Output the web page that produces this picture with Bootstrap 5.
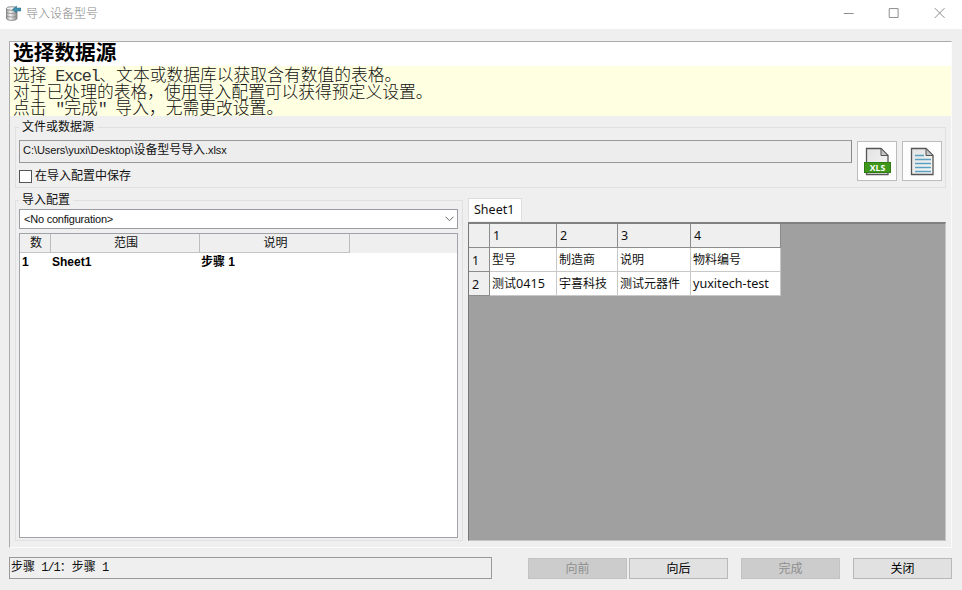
<!DOCTYPE html>
<html lang="zh-CN">
<head>
<meta charset="utf-8">
<title>导入设备型号</title>
<link href="https://cdn.jsdelivr.net/npm/bootstrap@5.3.0/dist/css/bootstrap.min.css" rel="stylesheet">
<style>
body{width:962px;height:590px;background:#efefef;font:12px/16px "Liberation Sans","Noto Sans CJK SC",sans-serif;color:#111;overflow:hidden}
.titlebar{height:29px;background:#fff;color:#858585;padding-left:5px}
.titlebar .caption{margin-left:5px;line-height:28px;font-weight:300}
.winbtns{width:136px;height:29px}
.winbtns svg{width:46px;height:29px}
.panel{margin:12px 10px 0 9px;height:507px;border:1px solid;border-color:#ababab #fbfbfb #fbfbfb #ababab}
.heading{height:24px;background:#fff;padding-left:3px;font:700 20.7px/19px "Noto Sans CJK SC",sans-serif;color:#000}
.hint{height:50px;background:#ffffe1;padding-left:3px;font:300 16.8px/16.6px "Noto Sans CJK SC",sans-serif;color:#111;white-space:pre}
.hint>div{height:16.6px}
.hint .half{font:16.8px/0 "Liberation Mono",monospace;letter-spacing:-1.28px;color:#333}
.group{border:1px solid #e0e0e0}
.group .caption{width:max-content;background:#efefef;padding:0 3px;margin:-9px 0 0 3px;height:16px}
.g-source{margin:11px 5px 0;height:61px}
.g-config{width:448px;height:341px}
.path{width:833px;height:23px;border:1px solid #999;border-right-color:#888;background:#ededed;padding:1px 3px;font-size:11px;letter-spacing:-.06px;line-height:16px;margin-top:5px}
.path .cjk{font-size:12px;letter-spacing:-.1px}
.source-left{width:838px;margin-left:3px}
.source-left label{margin-top:5px}
.chk{width:13px;height:13px;border:1px solid #555;background:#fff;margin-right:3px}
.toolbtn{width:40px;height:40px;border:1px solid #bcbcbc;background:#fdfdfd;margin-top:13px}
.toolbtn+.toolbtn{margin-left:5px}
.combo{width:439px;height:20px;border:1px solid #999ca0;background:#fff;margin:1px 0 0 3px;padding:0 3px 0 4px;font-size:11px;letter-spacing:-.22px}
.tree{width:439px;height:305px;border:1px solid #a0a4a8;background:#fff;margin:4px 0 0 3px}
.tree .thead{height:19px;background:#efefef;font-weight:400}
.tree .thead div{border-right:1px solid #bdbdbd;border-bottom:1px solid #c4c4c4;text-align:center;line-height:19px;height:19px;padding-left:2px}
.c-a{width:31px}.c-b{width:149px}.c-c{width:150px}
.tree .trow{font-weight:700;line-height:18px;color:#000}
.tree .trow div{padding-left:2px}
.tree .trow div+div{padding-left:1px}
.lower{margin:12px 0 0 5px}
.preview{width:478px;margin:-2px 0 0 5px;font-family:"Noto Sans","Noto Sans CJK SC",sans-serif}
.sheet-tab{width:54px;height:23px;background:#fff;border:1px solid #dedede;border-bottom:0;line-height:22px;padding-left:5px;font-size:12.5px;margin-bottom:1px}
.gridarea{height:319px;background:#a0a0a0;border:1px solid;border-color:#808080 #c5c5c5 #c5c5c5 #777;border-top-width:2px}
.sheet{width:312px;table-layout:fixed;border-collapse:separate;border-spacing:0;font-size:12px;line-height:20px}
.sheet th,.sheet td{height:24px;padding:0 0 0 2px;font-weight:400;border-right:1px solid #c8c8c8;border-bottom:1px solid #c8c8c8;background:#fff;white-space:nowrap;vertical-align:middle}
.sheet th{background:#efefef;border-color:#8c8c8c;padding-left:3px;font-size:12.5px}
.sheet tbody th{padding-top:2px}
.sheet thead th{height:24px}
.latin{font-size:12.6px}
.footer-row{margin:10px 10px 0 9px}
.status{width:483px;height:22px;margin-top:-1px;border:1px solid #999;font:12px/15px "Noto Sans CJK SC",sans-serif;padding-left:1px;white-space:pre}
.status .half{font:12px/0 "Liberation Mono",monospace;letter-spacing:-1px}
.dlgbtn{width:99px;height:21px;border:1px solid #b8b8b8;border-radius:0;background:#e1e1e1;padding:0;font-size:12px;line-height:18px;color:#000}
.dlgbtn:disabled{background:#cccccc;border-color:#c2c2c2;color:#8e8e8e;opacity:1}
.actions .dlgbtn+.dlgbtn{margin-left:2px}
.actions .dlgbtn:nth-child(n+3){margin-left:13px}
</style>
</head>
<body>
<header class="titlebar d-flex">
  <svg width="16" height="17" viewBox="0 0 16 17" class="mt-1 pt-0">
    <defs><linearGradient id="cyl"><stop offset="0" stop-color="#999"/><stop offset=".35" stop-color="#f4f4f4"/><stop offset="1" stop-color="#888"/></linearGradient></defs>
    <path d="M1.500 4.500v10c0 2.500 10.500 2.500 10.500 0v-10z" fill="url(#cyl)" stroke="#777" stroke-width=".8"/>
    <ellipse cx="6.700" cy="4.500" rx="5.300" ry="1.800" fill="#eee" stroke="#777" stroke-width=".8"/>
    <path d="M1.500 8c1 2 9.500 2 10.500 0M1.500 11.500c1 2 9.500 2 10.500 0" fill="none" stroke="#888" stroke-width=".8"/>
    <path d="M7.500 5.500l4-3.500v2H16v3h-4.500v2z" fill="#3f8fae" stroke="#2d6f8b" stroke-width=".5"/>
  </svg>
  <span class="caption">导入设备型号</span>
  <div class="winbtns d-flex ms-auto">
    <svg viewBox="0 0 46 29"><path d="M18 13.500h10" stroke="#8c8c8c"/></svg>
    <svg viewBox="0 0 46 29"><path d="M18.500 8.500h9v9h-9z" fill="none" stroke="#8c8c8c"/></svg>
    <svg viewBox="0 0 46 29"><path d="M18 8l10 10M28 8L18 18" stroke="#8c8c8c"/></svg>
  </div>
</header>
<main class="panel">
  <div class="heading">选择数据源</div>
  <div class="hint"><div>选择<span class="half"> Excel</span>、文本或数据库以获取含有数值的表格。</div><div>对于已处理的表格，使用导入配置可以获得预定义设置。</div><div>点击<span class="half"> "</span>完成<span class="half">" </span>导入，无需更改设置。</div></div>
  <section class="group g-source d-flex">
    <div class="source-left">
      <div class="caption ms-0">文件或数据源</div>
      <div class="path">C:\Users\yuxi\Desktop\<span class="cjk">设备型号导入</span>.xlsx</div>
      <label class="d-flex align-items-center"><span class="chk"></span><span>在导入配置中保存</span></label>
    </div>
    <div class="toolbtn">
      <svg width="38" height="38" viewBox="0 0 38 38">
        <defs><linearGradient id="pg" x2="1" y2="1"><stop offset="0" stop-color="#e2e2e2"/><stop offset="1" stop-color="#f8f8f8"/></linearGradient></defs>
        <path d="M8.500 6.500h14.500l7 7v19H8.500z" fill="url(#pg)" stroke="#555" stroke-width="1.300"/>
        <path d="M23 6.500v7h7z" fill="#c5c5c5" stroke="#555"/>
        <rect x="6.500" y="20.500" width="26" height="10" fill="#3f981b" stroke="#2f7d12"/>
        <text x="19.500" y="29" text-anchor="middle" textLength="15.500" lengthAdjust="spacingAndGlyphs" font-family="Open Sans,sans-serif" font-size="9.500" font-weight="700" fill="#fff">XLS</text>
      </svg>
    </div>
    <div class="toolbtn">
      <svg width="38" height="38" viewBox="0 0 38 38">
        <path d="M8.500 6.500h14.500l7 7v19H8.500z" fill="url(#pg)" stroke="#555" stroke-width="1.300"/>
        <path d="M23 6.500v7h7z" fill="#c5c5c5" stroke="#555"/>
        <path d="M12 13.500h9M12 17.500h16M12 21.500h16M12 25.500h16M12 29.500h16" stroke="#5aa0bf" stroke-width="1.300"/>
      </svg>
    </div>
  </section>
  <div class="d-flex lower">
    <section class="group g-config">
      <div class="caption">导入配置</div>
      <div class="combo d-flex align-items-center justify-content-between"><span>&lt;No configuration&gt;</span><svg width="9" height="6" viewBox="0 0 9 6"><path d="M.5.7l4 4 4-4" fill="none" stroke="#666"/></svg></div>
      <div class="tree">
        <div class="thead d-flex"><div class="c-a">数</div><div class="c-b">范围</div><div class="c-c">说明</div></div>
        <div class="trow d-flex"><div class="c-a">1</div><div class="c-b">Sheet1</div><div class="c-c">步骤 1</div></div>
      </div>
    </section>
    <section class="preview">
      <div class="sheet-tab">Sheet1</div>
      <div class="gridarea">
        <table class="sheet">
          <colgroup><col width="21"><col width="67"><col width="61"><col width="73"><col width="90"></colgroup>
          <thead><tr><th></th><th>1</th><th>2</th><th>3</th><th>4</th></tr></thead>
          <tbody>
            <tr><th>1</th><td>型号</td><td>制造商</td><td>说明</td><td>物料编号</td></tr>
            <tr><th>2</th><td>测试<span class="latin">0415</span></td><td>宇喜科技</td><td>测试元器件</td><td><span class="latin">yuxitech-test</span></td></tr>
          </tbody>
        </table>
      </div>
    </section>
  </div>
</main>
<footer class="footer-row d-flex">
  <div class="status">步骤<span class="half"> 1/1</span>：步骤<span class="half"> 1</span></div>
  <div class="d-flex ms-auto actions">
    <button class="btn dlgbtn" disabled>向前</button>
    <button class="btn dlgbtn">向后</button>
    <button class="btn dlgbtn" disabled>完成</button>
    <button class="btn dlgbtn">关闭</button>
  </div>
</footer>
<script src="https://cdn.jsdelivr.net/npm/bootstrap@5.3.0/dist/js/bootstrap.bundle.min.js"></script>
</body>
</html>
